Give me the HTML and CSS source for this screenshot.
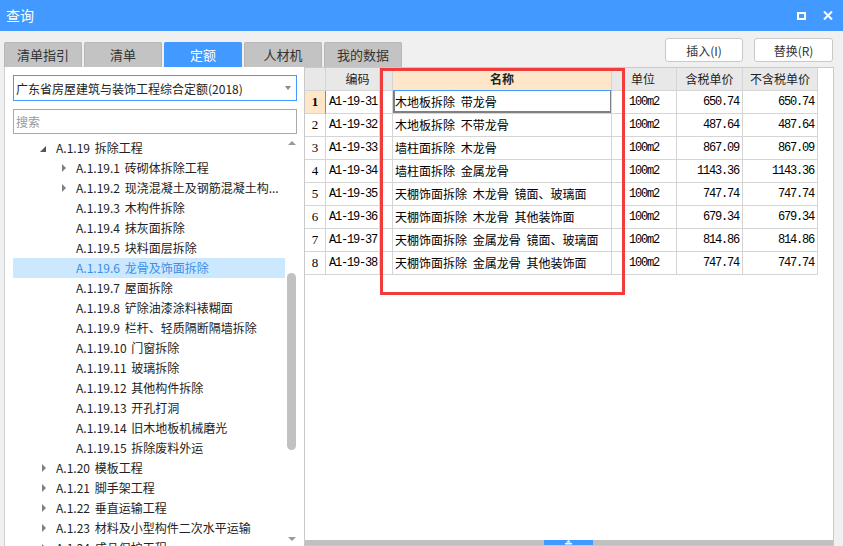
FILE: index.html
```html
<!DOCTYPE html>
<html lang="zh-CN">
<head>
<meta charset="utf-8">
<title>查询</title>
<link rel="stylesheet" href="styles.css">
</head>
<body>
<div class="titlebar">
  <span class="title">查询</span>
  <div class="win-btns">
    <span class="btn-max"></span>
    <svg class="btn-close" width="10" height="9" viewBox="0 0 10 9"><path d="M1 0.5 L9 8.5 M9 0.5 L1 8.5" stroke="#fff" stroke-width="2" fill="none"/></svg>
  </div>
</div>
<div class="content">
  <div class="left">
    <div class="tabs">
      <div class="tab">清单指引</div>
      <div class="tab">清单</div>
      <div class="tab active">定额</div>
      <div class="tab">人材机</div>
      <div class="tab">我的数据</div>
    </div>
    <div class="left-panel">
      <div class="select"><span>广东省房屋建筑与装饰工程综合定额(2018)</span><span class="caret"></span></div>
      <div class="search">搜索</div>
      <div class="tree-wrap">
        <ul class="tree">
          <li class="row l1"><span class="tog open"></span>A.1.19 拆除工程</li>
          <li class="row l2"><span class="tog closed"></span>A.1.19.1 砖砌体拆除工程</li>
          <li class="row l2"><span class="tog closed"></span>A.1.19.2 现浇混凝土及钢筋混凝土构...</li>
          <li class="row l2"><span class="tog"></span>A.1.19.3 木构件拆除</li>
          <li class="row l2"><span class="tog"></span>A.1.19.4 抹灰面拆除</li>
          <li class="row l2"><span class="tog"></span>A.1.19.5 块料面层拆除</li>
          <li class="row l2 sel"><span class="tog"></span>A.1.19.6 龙骨及饰面拆除</li>
          <li class="row l2"><span class="tog"></span>A.1.19.7 屋面拆除</li>
          <li class="row l2"><span class="tog"></span>A.1.19.8 铲除油漆涂料裱糊面</li>
          <li class="row l2"><span class="tog"></span>A.1.19.9 栏杆、轻质隔断隔墙拆除</li>
          <li class="row l2"><span class="tog"></span>A.1.19.10 门窗拆除</li>
          <li class="row l2"><span class="tog"></span>A.1.19.11 玻璃拆除</li>
          <li class="row l2"><span class="tog"></span>A.1.19.12 其他构件拆除</li>
          <li class="row l2"><span class="tog"></span>A.1.19.13 开孔打洞</li>
          <li class="row l2"><span class="tog"></span>A.1.19.14 旧木地板机械磨光</li>
          <li class="row l2"><span class="tog"></span>A.1.19.15 拆除废料外运</li>
          <li class="row l1"><span class="tog closed"></span>A.1.20 模板工程</li>
          <li class="row l1"><span class="tog closed"></span>A.1.21 脚手架工程</li>
          <li class="row l1"><span class="tog closed"></span>A.1.22 垂直运输工程</li>
          <li class="row l1"><span class="tog closed"></span>A.1.23 材料及小型构件二次水平运输</li>
          <li class="row l1"><span class="tog closed"></span>A.1.24 成品保护工程</li>
        </ul>
        <div class="vscroll">
          <span class="up"></span>
          <span class="thumb"></span>
          <span class="down"></span>
        </div>
      </div>
    </div>
  </div>
  <div class="right">
    <div class="toolbar">
      <button class="btn b1">插入(I)</button>
      <button class="btn b2">替换(R)</button>
    </div>
    <div class="grid-panel">
      <div class="grid">
        <div class="c h"></div><div class="c h code-h">编码</div><div class="c h"></div><div class="c h name-h">名称</div><div class="c h"></div><div class="c h unit-h">单位</div><div class="c h">含税单价</div><div class="c h">不含税单价</div>

        <div class="c n cur">1</div><div class="c code">A1-19-31</div><div class="c"></div><div class="c nm focus">木地板拆除 带龙骨</div><div class="c"></div><div class="c u">100m2</div><div class="c p">650.74</div><div class="c p">650.74</div>

        <div class="c n">2</div><div class="c code">A1-19-32</div><div class="c"></div><div class="c nm">木地板拆除 不带龙骨</div><div class="c"></div><div class="c u">100m2</div><div class="c p">487.64</div><div class="c p">487.64</div>

        <div class="c n">3</div><div class="c code">A1-19-33</div><div class="c"></div><div class="c nm">墙柱面拆除 木龙骨</div><div class="c"></div><div class="c u">100m2</div><div class="c p">867.09</div><div class="c p">867.09</div>

        <div class="c n">4</div><div class="c code">A1-19-34</div><div class="c"></div><div class="c nm">墙柱面拆除 金属龙骨</div><div class="c"></div><div class="c u">100m2</div><div class="c p">1143.36</div><div class="c p">1143.36</div>

        <div class="c n">5</div><div class="c code">A1-19-35</div><div class="c"></div><div class="c nm">天棚饰面拆除 木龙骨 镜面、玻璃面</div><div class="c"></div><div class="c u">100m2</div><div class="c p">747.74</div><div class="c p">747.74</div>

        <div class="c n">6</div><div class="c code">A1-19-36</div><div class="c"></div><div class="c nm">天棚饰面拆除 木龙骨 其他装饰面</div><div class="c"></div><div class="c u">100m2</div><div class="c p">679.34</div><div class="c p">679.34</div>

        <div class="c n">7</div><div class="c code">A1-19-37</div><div class="c"></div><div class="c nm">天棚饰面拆除 金属龙骨 镜面、玻璃面</div><div class="c"></div><div class="c u">100m2</div><div class="c p">814.86</div><div class="c p">814.86</div>

        <div class="c n">8</div><div class="c code">A1-19-38</div><div class="c"></div><div class="c nm">天棚饰面拆除 金属龙骨 其他装饰面</div><div class="c"></div><div class="c u">100m2</div><div class="c p">747.74</div><div class="c p">747.74</div>
      </div>
      <div class="mark"></div>
      <div class="hscroll">
        <span class="handle"><svg width="7" height="5" viewBox="0 0 7 5"><polygon points="3.5,0 6,2.5 1,2.5" fill="#fff"/><rect x="0" y="3" width="7" height="1.5" fill="#fff"/></svg></span>
      </div>
    </div>
  </div>
</div>
</body>
</html>
```

FILE: styles.css
```css
* { box-sizing: border-box; }
html, body { margin: 0; padding: 0; }
body {
  width: 843px;
  height: 546px;
  overflow: hidden;
  background: #f0f0f0;
  font-family: "Noto Sans CJK SC", "Noto Sans", sans-serif;
  font-size: 12px;
  color: #222;
}

.titlebar {
  height: 31px;
  background: #4299ff;
  color: #fff;
  display: flex;
  align-items: center;
  justify-content: space-between;
  padding: 0 10px 0 6px;
}
.title { font-size: 14px; line-height: 31px; }
.win-btns { display: flex; align-items: center; gap: 17px; }
.btn-max {
  width: 9px;
  height: 8px;
  border: 2px solid #fff;
  display: block;
}
.btn-close { display: block; }

.content {
  display: flex;
  padding-left: 4px;
  height: 515px;
}

.left {
  width: 300px;
  flex: none;
  display: flex;
  flex-direction: column;
}
.tabs {
  display: flex;
  gap: 2px;
  margin-top: 11px;
  height: 25px;
  overflow: visible;
}
.tab {
  flex: none;
  width: 78px;
  height: 25px;
  background: #c3c3c3;
  border: 1px solid #b6b6b6;
  border-bottom: none;
  border-radius: 2px 2px 0 0;
  text-align: center;
  line-height: 24px;
  font-size: 13px;
  color: #333;
  position: relative;
  z-index: 1;
}
.tab.active {
  background: #4299ff;
  border-color: #4299ff;
  color: #fff;
}

.left-panel {
  flex: 1;
  background: #fff;
  border-left: 1px solid #d2d2d2;
  padding: 8px 0 0 8px;
  overflow: hidden;
}
.select {
  width: 284px;
  height: 26px;
  border: 1px solid #4299ff;
  display: flex;
  align-items: center;
  padding-left: 2px;
  color: #222;
  white-space: nowrap;
}
.caret {
  margin-left: auto;
  margin-right: 5px;
  width: 0;
  height: 0;
  border-top: 4px solid #888;
  border-left: 3px solid transparent;
  border-right: 3px solid transparent;
}
.search {
  width: 284px;
  height: 25px;
  margin-top: 8px;
  border: 1px solid #a9a9a9;
  color: #999;
  padding-left: 2px;
  line-height: 23px;
}
.tree-wrap {
  width: 284px;
  height: 410px;
  margin-top: 2px;
  display: flex;
}
.tree {
  flex: 1;
  list-style: none;
  margin: 0;
  padding: 2px 0 0 0;
  overflow: hidden;
}
.row {
  height: 20px;
  line-height: 20px;
  display: flex;
  align-items: center;
  white-space: pre;
  word-spacing: 2px;
  color: #222;
}
.row.l1 { padding-left: 25px; }
.row.l2 { padding-left: 45px; }
.row.sel { background: #cce8ff; color: #3b8ee8; }
.tog {
  position: relative;
  flex: none;
  width: 18px;
  height: 20px;
}
.tog.closed::before {
  content: "";
  position: absolute;
  left: 4px;
  top: 6px;
  border-left: 4px solid #808080;
  border-top: 4px solid transparent;
  border-bottom: 4px solid transparent;
}
.tog.open::before {
  content: "";
  position: absolute;
  left: 2px;
  top: 8px;
  border-right: 6px solid #555;
  border-top: 6px solid transparent;
}
.vscroll {
  width: 12px;
  flex: none;
  display: flex;
  flex-direction: column;
  align-items: center;
  padding: 5px 0 5px 1px;
}
.up {
  width: 0; height: 0;
  border-bottom: 4px solid #999;
  border-left: 4px solid transparent;
  border-right: 4px solid transparent;
}
.thumb {
  width: 9px;
  height: 177px;
  margin-top: 128px;
  border-radius: 5px;
  background: #c1c1c1;
}
.down {
  margin-top: auto;
  width: 0; height: 0;
  border-top: 4px solid #999;
  border-left: 4px solid transparent;
  border-right: 4px solid transparent;
}

.right {
  width: 530px;
  flex: none;
  display: flex;
  flex-direction: column;
}
.toolbar {
  height: 36px;
  display: flex;
  justify-content: flex-end;
  align-items: flex-start;
  gap: 11px;
  padding: 7px 1px 0 0;
}
.btn {
  height: 24px;
  background: #fff;
  border: 1px solid #c9c9c9;
  border-radius: 3px;
  font-family: "Noto Sans CJK SC", "Noto Sans", sans-serif;
  font-size: 12px;
  color: #333;
  padding: 0;
}
.b1 { width: 78px; }
.b2 { width: 79px; }

.grid-panel {
  position: relative;
  flex: 1;
  background: #fff;
  border: 1px solid #c9c9c9;
  display: flex;
  flex-direction: column;
}
.grid {
  display: grid;
  grid-template-columns: 21px 54px 13px 219px 13px 52px 66px 75px;
  grid-auto-rows: 23px;
  width: 513px;
}
.c {
  border-right: 1px solid #d5d5d5;
  border-bottom: 1px solid #d5d5d5;
  line-height: 22px;
  white-space: nowrap;
  overflow: hidden;
  color: #000;
}
.h {
  background: #e8e8e8;
  text-align: center;
  color: #222;
}
.code-h { padding-left: 10px; }
.name-h {
  background: #fde7c8;
  font-weight: bold;
  border-bottom-color: #4299ff;
}
.unit-h { text-align: left; padding-left: 6px; }
.n {
  text-align: center;
  font-family: "Liberation Serif", serif;
  font-size: 13px;
}
.n.cur {
  background: #fde7c8;
  font-weight: bold;
  border-right-color: #4299ff;
}
.code, .u, .p {
  font-family: "Liberation Mono", monospace;
  font-size: 12px;
  letter-spacing: -1.2px;
}
.code { padding-left: 3px; }
.u { padding-left: 4px; }
.p { text-align: right; padding-right: 3px; }
.nm { padding-left: 2px; word-spacing: 3px; }
.nm.focus {
  box-shadow: inset 2px 0 0 #808080, inset 0 -2px 0 #808080, inset -1px 0 0 #808080;
}

.mark {
  position: absolute;
  left: 75px;
  top: 0;
  width: 245px;
  height: 227px;
  border: 3px solid #f23c3c;
}

.hscroll {
  margin-top: auto;
  height: 5px;
  background: #c0c0c0;
  display: flex;
}
.handle {
  margin-left: 239px;
  width: 49px;
  height: 5px;
  background: #4299ff;
  display: flex;
  justify-content: center;
  align-items: flex-end;
}
.handle svg { display: block; }
```
